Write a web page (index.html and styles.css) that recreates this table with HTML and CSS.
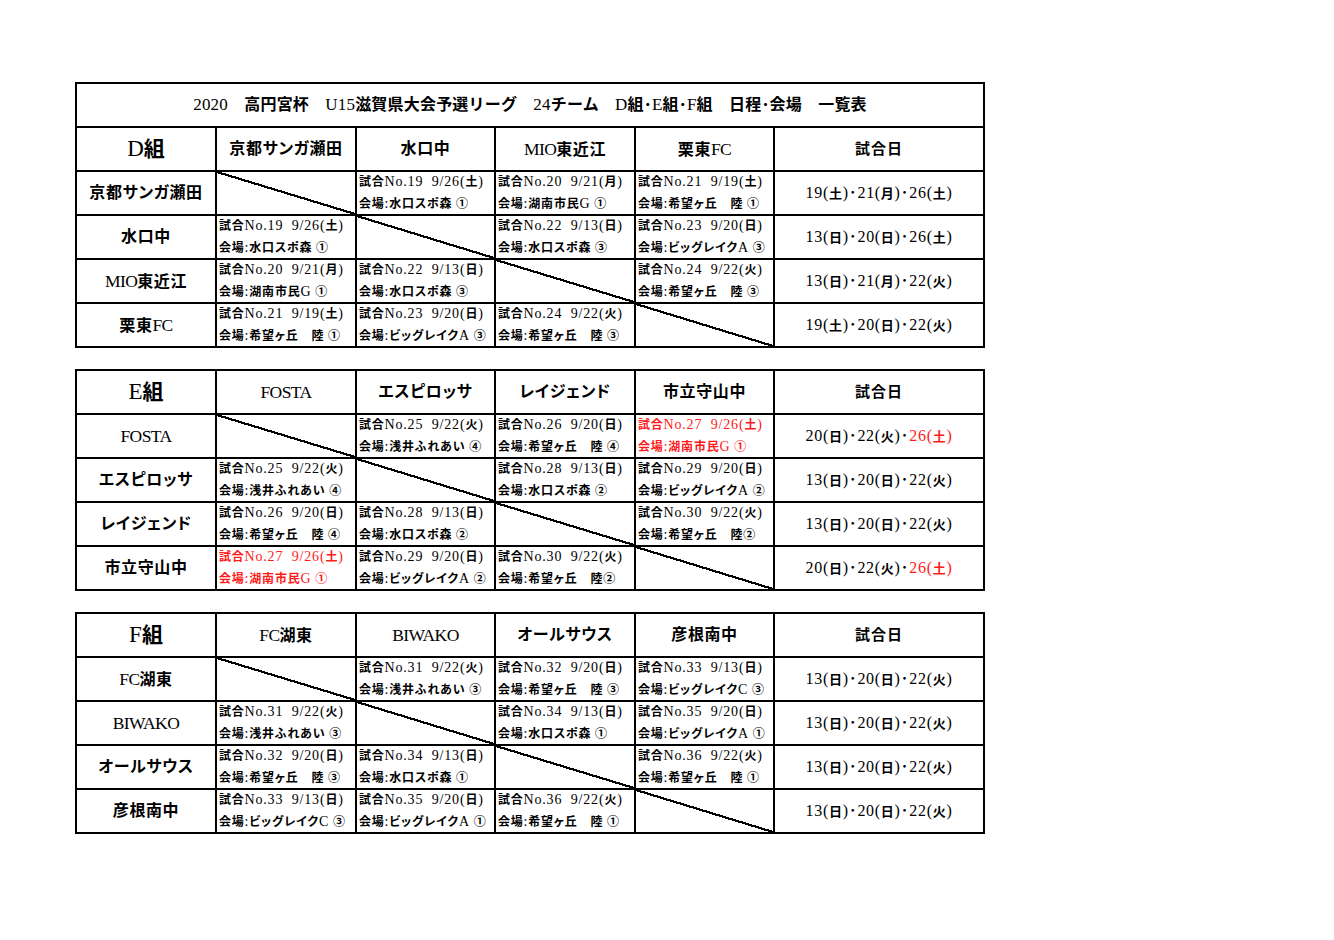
FILE: index.html
```html
<!DOCTYPE html>
<html lang="ja">
<head>
<meta charset="utf-8">
<title>日程・会場 一覧表</title>
<link rel="stylesheet" href="styles.css">
</head>
<body>
<div class="page">

<table class="grid">
<colgroup><col class="c1"><col class="c2"><col class="c3"><col class="c4"><col class="c5"><col class="c6"></colgroup>
<tr><td colspan="6" class="title"><span class="n">2020</span>　高円宮杯　<span class="n">U15</span>滋賀県大会予選リーグ　<span class="n">24</span>チーム　<span class="n">D</span>組･<span class="n">E</span>組･<span class="n">F</span>組　日程･会場　一覧表</td></tr>
<tr>
<td class="grp"><span class="n">D</span>組</td>
<td class="team">京都サンガ瀬田</td>
<td class="team">水口中</td>
<td class="team"><span class="n">MIO</span>東近江</td>
<td class="team">栗東<span class="n">FC</span></td>
<td class="team day">試合日</td>
</tr>
<tr>
<td class="rowh">京都サンガ瀬田</td>
<td class="x"></td>
<td class="m"><p>試合<span class="n">No.19&nbsp;&nbsp;9/26(</span>土<span class="n">)</span></p><p>会場<span class="n">:</span>水口スポ森 ①</p></td>
<td class="m"><p>試合<span class="n">No.20&nbsp;&nbsp;9/21(</span>月<span class="n">)</span></p><p>会場<span class="n">:</span>湖南市民<span class="n">G</span> ①</p></td>
<td class="m"><p>試合<span class="n">No.21&nbsp;&nbsp;9/19(</span>土<span class="n">)</span></p><p>会場<span class="n">:</span>希望ヶ丘　陸 ①</p></td>
<td class="d">19(<b>土</b>)･21(<b>月</b>)･26(<b>土</b>)</td>
</tr>
<tr>
<td class="rowh">水口中</td>
<td class="m"><p>試合<span class="n">No.19&nbsp;&nbsp;9/26(</span>土<span class="n">)</span></p><p>会場<span class="n">:</span>水口スポ森 ①</p></td>
<td class="x"></td>
<td class="m"><p>試合<span class="n">No.22&nbsp;&nbsp;9/13(</span>日<span class="n">)</span></p><p>会場<span class="n">:</span>水口スポ森 ③</p></td>
<td class="m"><p>試合<span class="n">No.23&nbsp;&nbsp;9/20(</span>日<span class="n">)</span></p><p>会場<span class="n">:</span>ビッグレイク<span class="n">A</span> ③</p></td>
<td class="d">13(<b>日</b>)･20(<b>日</b>)･26(<b>土</b>)</td>
</tr>
<tr>
<td class="rowh"><span class="n">MIO</span>東近江</td>
<td class="m"><p>試合<span class="n">No.20&nbsp;&nbsp;9/21(</span>月<span class="n">)</span></p><p>会場<span class="n">:</span>湖南市民<span class="n">G</span> ①</p></td>
<td class="m"><p>試合<span class="n">No.22&nbsp;&nbsp;9/13(</span>日<span class="n">)</span></p><p>会場<span class="n">:</span>水口スポ森 ③</p></td>
<td class="x"></td>
<td class="m"><p>試合<span class="n">No.24&nbsp;&nbsp;9/22(</span>火<span class="n">)</span></p><p>会場<span class="n">:</span>希望ヶ丘　陸 ③</p></td>
<td class="d">13(<b>日</b>)･21(<b>月</b>)･22(<b>火</b>)</td>
</tr>
<tr>
<td class="rowh">栗東<span class="n">FC</span></td>
<td class="m"><p>試合<span class="n">No.21&nbsp;&nbsp;9/19(</span>土<span class="n">)</span></p><p>会場<span class="n">:</span>希望ヶ丘　陸 ①</p></td>
<td class="m"><p>試合<span class="n">No.23&nbsp;&nbsp;9/20(</span>日<span class="n">)</span></p><p>会場<span class="n">:</span>ビッグレイク<span class="n">A</span> ③</p></td>
<td class="m"><p>試合<span class="n">No.24&nbsp;&nbsp;9/22(</span>火<span class="n">)</span></p><p>会場<span class="n">:</span>希望ヶ丘　陸 ③</p></td>
<td class="x"></td>
<td class="d">19(<b>土</b>)･20(<b>日</b>)･22(<b>火</b>)</td>
</tr>
</table>

<table class="grid">
<colgroup><col class="c1"><col class="c2"><col class="c3"><col class="c4"><col class="c5"><col class="c6"></colgroup>
<tr>
<td class="grp"><span class="n">E</span>組</td>
<td class="team"><span class="n">FOSTA</span></td>
<td class="team">エスピロッサ</td>
<td class="team">レイジェンド</td>
<td class="team">市立守山中</td>
<td class="team day">試合日</td>
</tr>
<tr>
<td class="rowh"><span class="n">FOSTA</span></td>
<td class="x"></td>
<td class="m"><p>試合<span class="n">No.25&nbsp;&nbsp;9/22(</span>火<span class="n">)</span></p><p>会場<span class="n">:</span>浅井ふれあい ④</p></td>
<td class="m"><p>試合<span class="n">No.26&nbsp;&nbsp;9/20(</span>日<span class="n">)</span></p><p>会場<span class="n">:</span>希望ヶ丘　陸 ④</p></td>
<td class="m red"><p>試合<span class="n">No.27&nbsp;&nbsp;9/26(</span>土<span class="n">)</span></p><p>会場<span class="n">:</span>湖南市民<span class="n">G</span> ①</p></td>
<td class="d">20(<b>日</b>)･22(<b>火</b>)･<span class="redt">26(<b>土</b>)</span></td>
</tr>
<tr>
<td class="rowh">エスピロッサ</td>
<td class="m"><p>試合<span class="n">No.25&nbsp;&nbsp;9/22(</span>火<span class="n">)</span></p><p>会場<span class="n">:</span>浅井ふれあい ④</p></td>
<td class="x"></td>
<td class="m"><p>試合<span class="n">No.28&nbsp;&nbsp;9/13(</span>日<span class="n">)</span></p><p>会場<span class="n">:</span>水口スポ森 ②</p></td>
<td class="m"><p>試合<span class="n">No.29&nbsp;&nbsp;9/20(</span>日<span class="n">)</span></p><p>会場<span class="n">:</span>ビッグレイク<span class="n">A</span> ②</p></td>
<td class="d">13(<b>日</b>)･20(<b>日</b>)･22(<b>火</b>)</td>
</tr>
<tr>
<td class="rowh">レイジェンド</td>
<td class="m"><p>試合<span class="n">No.26&nbsp;&nbsp;9/20(</span>日<span class="n">)</span></p><p>会場<span class="n">:</span>希望ヶ丘　陸 ④</p></td>
<td class="m"><p>試合<span class="n">No.28&nbsp;&nbsp;9/13(</span>日<span class="n">)</span></p><p>会場<span class="n">:</span>水口スポ森 ②</p></td>
<td class="x"></td>
<td class="m"><p>試合<span class="n">No.30&nbsp;&nbsp;9/22(</span>火<span class="n">)</span></p><p>会場<span class="n">:</span>希望ヶ丘　陸②</p></td>
<td class="d">13(<b>日</b>)･20(<b>日</b>)･22(<b>火</b>)</td>
</tr>
<tr>
<td class="rowh">市立守山中</td>
<td class="m red"><p>試合<span class="n">No.27&nbsp;&nbsp;9/26(</span>土<span class="n">)</span></p><p>会場<span class="n">:</span>湖南市民<span class="n">G</span> ①</p></td>
<td class="m"><p>試合<span class="n">No.29&nbsp;&nbsp;9/20(</span>日<span class="n">)</span></p><p>会場<span class="n">:</span>ビッグレイク<span class="n">A</span> ②</p></td>
<td class="m"><p>試合<span class="n">No.30&nbsp;&nbsp;9/22(</span>火<span class="n">)</span></p><p>会場<span class="n">:</span>希望ヶ丘　陸②</p></td>
<td class="x"></td>
<td class="d">20(<b>日</b>)･22(<b>火</b>)･<span class="redt">26(<b>土</b>)</span></td>
</tr>
</table>

<table class="grid">
<colgroup><col class="c1"><col class="c2"><col class="c3"><col class="c4"><col class="c5"><col class="c6"></colgroup>
<tr>
<td class="grp"><span class="n">F</span>組</td>
<td class="team"><span class="n">FC</span>湖東</td>
<td class="team"><span class="n">BIWAKO</span></td>
<td class="team">オールサウス</td>
<td class="team">彦根南中</td>
<td class="team day">試合日</td>
</tr>
<tr>
<td class="rowh"><span class="n">FC</span>湖東</td>
<td class="x"></td>
<td class="m"><p>試合<span class="n">No.31&nbsp;&nbsp;9/22(</span>火<span class="n">)</span></p><p>会場<span class="n">:</span>浅井ふれあい ③</p></td>
<td class="m"><p>試合<span class="n">No.32&nbsp;&nbsp;9/20(</span>日<span class="n">)</span></p><p>会場<span class="n">:</span>希望ヶ丘　陸 ③</p></td>
<td class="m"><p>試合<span class="n">No.33&nbsp;&nbsp;9/13(</span>日<span class="n">)</span></p><p>会場<span class="n">:</span>ビッグレイク<span class="n">C</span> ③</p></td>
<td class="d">13(<b>日</b>)･20(<b>日</b>)･22(<b>火</b>)</td>
</tr>
<tr>
<td class="rowh"><span class="n">BIWAKO</span></td>
<td class="m"><p>試合<span class="n">No.31&nbsp;&nbsp;9/22(</span>火<span class="n">)</span></p><p>会場<span class="n">:</span>浅井ふれあい ③</p></td>
<td class="x"></td>
<td class="m"><p>試合<span class="n">No.34&nbsp;&nbsp;9/13(</span>日<span class="n">)</span></p><p>会場<span class="n">:</span>水口スポ森 ①</p></td>
<td class="m"><p>試合<span class="n">No.35&nbsp;&nbsp;9/20(</span>日<span class="n">)</span></p><p>会場<span class="n">:</span>ビッグレイク<span class="n">A</span> ①</p></td>
<td class="d">13(<b>日</b>)･20(<b>日</b>)･22(<b>火</b>)</td>
</tr>
<tr>
<td class="rowh">オールサウス</td>
<td class="m"><p>試合<span class="n">No.32&nbsp;&nbsp;9/20(</span>日<span class="n">)</span></p><p>会場<span class="n">:</span>希望ヶ丘　陸 ③</p></td>
<td class="m"><p>試合<span class="n">No.34&nbsp;&nbsp;9/13(</span>日<span class="n">)</span></p><p>会場<span class="n">:</span>水口スポ森 ①</p></td>
<td class="x"></td>
<td class="m"><p>試合<span class="n">No.36&nbsp;&nbsp;9/22(</span>火<span class="n">)</span></p><p>会場<span class="n">:</span>希望ヶ丘　陸 ①</p></td>
<td class="d">13(<b>日</b>)･20(<b>日</b>)･22(<b>火</b>)</td>
</tr>
<tr>
<td class="rowh">彦根南中</td>
<td class="m"><p>試合<span class="n">No.33&nbsp;&nbsp;9/13(</span>日<span class="n">)</span></p><p>会場<span class="n">:</span>ビッグレイク<span class="n">C</span> ③</p></td>
<td class="m"><p>試合<span class="n">No.35&nbsp;&nbsp;9/20(</span>日<span class="n">)</span></p><p>会場<span class="n">:</span>ビッグレイク<span class="n">A</span> ①</p></td>
<td class="m"><p>試合<span class="n">No.36&nbsp;&nbsp;9/22(</span>火<span class="n">)</span></p><p>会場<span class="n">:</span>希望ヶ丘　陸 ①</p></td>
<td class="x"></td>
<td class="d">13(<b>日</b>)･20(<b>日</b>)･22(<b>火</b>)</td>
</tr>
</table>

</div>
</body>
</html>
```
FILE: styles.css
```css
html, body {
  margin: 0;
  padding: 0;
  background: #fff;
}
body {
  font-family: "Liberation Serif", "Noto Sans CJK JP", serif;
  color: #000;
}
.page {
  padding: 82px 0 0 75px;
}
.grid {
  border-collapse: collapse;
  table-layout: fixed;
  width: 908px;
  margin: 0 0 21px 0;
}
.c1 { width: 140px; }
.c2 { width: 140px; }
.c3 { width: 139px; }
.c4 { width: 140px; }
.c5 { width: 139px; }
.c6 { width: 210px; }
.grid tr {
  height: 44px;
}
.grid td {
  border: 2px solid #000;
  padding: 0;
  height: 42px;
  line-height: 20px;
  text-align: center;
  vertical-align: middle;
  font-weight: bold;
  white-space: nowrap;
  overflow: hidden;
}
.n {
  font-weight: normal;
}
.title {
  font-size: 16px;
  letter-spacing: 0.2px;
}
.title .n {
  font-size: 17px;
}
.grp {
  font-size: 21px;
}
.grp .n {
  font-size: 23px;
}
.team, .rowh {
  font-size: 16px;
  letter-spacing: 0.6px;
  font-feature-settings: "palt";
}
.team .n, .rowh .n {
  font-size: 17.5px;
  letter-spacing: -0.6px;
}
.day {
  font-size: 15px;
  letter-spacing: 1px;
}
.m {
  text-align: left !important;
  font-size: 12px;
  letter-spacing: 0.8px;
  padding-left: 2px !important;
  font-feature-settings: "palt";
}
.m .n {
  font-size: 14px;
  letter-spacing: 0.8px;
}
.m p {
  margin: 0;
  height: 21px;
  line-height: 21px;
  overflow: visible;
}
.m p:first-child {
  height: 20px;
  line-height: 18px;
}
.red {
  color: #ff1a1a;
}
.redt {
  color: #ff1a1a;
}
.d {
  font-size: 16px;
  font-weight: normal !important;
  letter-spacing: 0.7px;
}
.d b {
  font-size: 13px;
  font-weight: bold;
}
.x {
  background: linear-gradient(to top right,
    transparent calc(50% - 1.1px),
    #000 calc(50% - 1.1px),
    #000 calc(50% + 1.1px),
    transparent calc(50% + 1.1px));
}
```
